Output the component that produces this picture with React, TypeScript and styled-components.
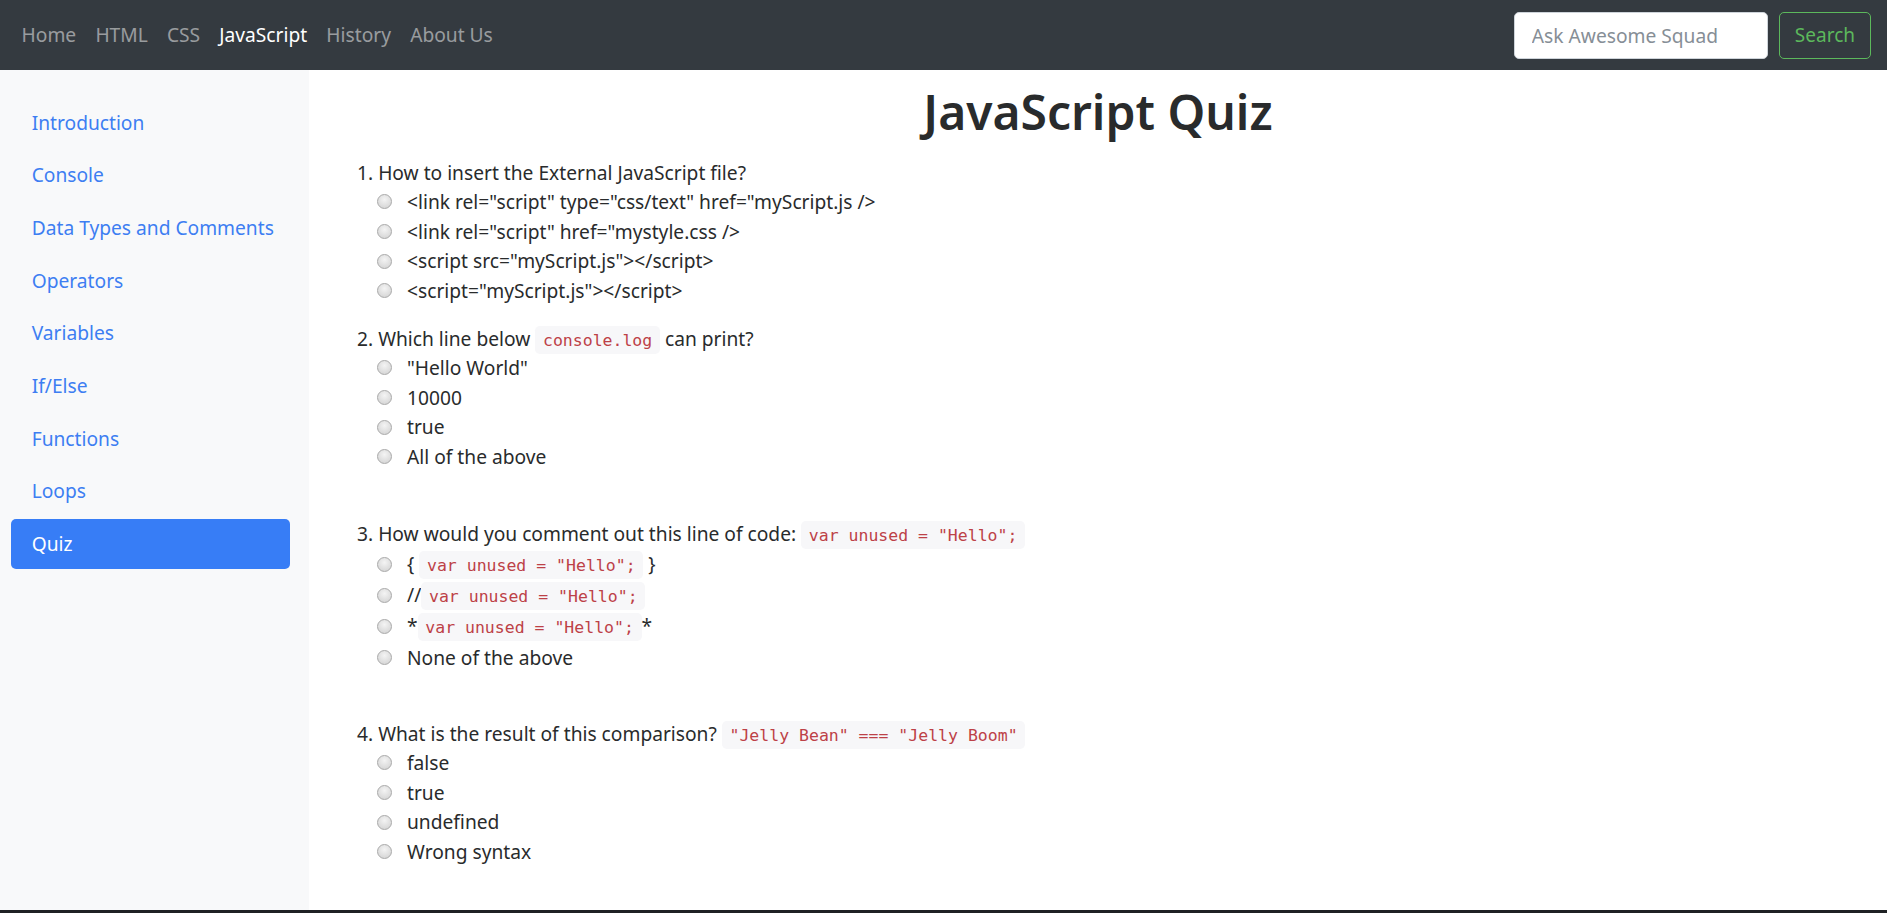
import React from 'react';
import styled, { createGlobalStyle } from 'styled-components';

const GlobalStyle = createGlobalStyle`
  html, body {
    margin: 0;
    padding: 0;
  }
  body {
    font-family: "Noto Sans", "Open Sans", sans-serif;
    color: #292b2c;
    background: #fff;
  }
  * {
    box-sizing: border-box;
  }
`;

const Page = styled.div`
  display: flex;
  flex-direction: column;
  height: 100vh;
  overflow: hidden;
`;

const Navbar = styled.nav`
  display: flex;
  align-items: center;
  justify-content: space-between;
  height: 70px;
  flex-shrink: 0;
  padding: 0 16px 0 12px;
  background: #343a40;
`;

const NavLinks = styled.div`
  display: flex;
  align-items: center;
`;

const NavLink = styled.a<{ $active?: boolean }>`
  padding: 0 9.6px;
  font-size: 19.2px;
  line-height: 28.8px;
  text-decoration: none;
  white-space: nowrap;
  color: ${p => (p.$active ? '#fff' : 'rgba(255, 255, 255, 0.5)')};
`;

const SearchForm = styled.form`
  display: flex;
  align-items: center;
  gap: 11px;
`;

const SearchInput = styled.input`
  width: 254px;
  height: 47px;
  padding: 0 17px;
  border: 1px solid #ced4da;
  border-radius: 5px;
  font-family: inherit;
  font-size: 19.2px;
  color: #495057;
  background: #fff;
  outline: none;

  &::placeholder {
    color: #868e96;
  }
`;

const SearchButton = styled.button`
  height: 47px;
  padding: 0 15px;
  border: 1px solid #5cb85c;
  border-radius: 5px;
  background: transparent;
  color: #5cb85c;
  font-family: inherit;
  font-size: 19px;
`;

const Body = styled.div`
  display: flex;
  flex: 1;
  min-height: 0;
`;

const Sidebar = styled.aside`
  display: flex;
  flex-direction: column;
  gap: 2.7px;
  width: 309px;
  flex-shrink: 0;
  padding: 27.6px 19px 0 11px;
  background: #f8f9fa;
`;

const SideLink = styled.a<{ $active?: boolean }>`
  display: block;
  height: 50px;
  padding: 0 20.7px;
  line-height: 50px;
  font-size: 19.2px;
  white-space: nowrap;
  border-radius: 5px;
  text-decoration: none;
  color: ${p => (p.$active ? '#fff' : '#3d7ef2')};
  background: ${p => (p.$active ? '#377df6' : 'transparent')};
`;

const Main = styled.main`
  flex: 1;
  padding-top: 12.6px;
`;

const Title = styled.h1`
  margin: 0 0 17.4px;
  font-size: 48px;
  line-height: 57.6px;
  font-weight: 600;
  text-align: center;
  color: #292b2c;
`;

const QuizList = styled.div`
  padding-left: 48px;
`;

const Question = styled.div<{ $gap: number }>`
  margin-bottom: ${p => p.$gap}px;
`;

const QuestionText = styled.p<{ $row: number }>`
  margin: 0;
  font-size: 19.2px;
  line-height: ${p => p.$row}px;
  height: ${p => p.$row}px;
  white-space: nowrap;
`;

const Options = styled.div`
  padding-left: 20px;
`;

const Option = styled.label<{ $row: number }>`
  display: flex;
  align-items: center;
  gap: 15px;
  height: ${p => p.$row}px;
  font-size: 19.2px;
  line-height: ${p => p.$row}px;
  white-space: nowrap;
`;

const Radio = styled.input`
  appearance: none;
  width: 15px;
  height: 15px;
  margin: 0;
  flex-shrink: 0;
  border-radius: 50%;
  border: 1px solid #a9a9a9;
  background: radial-gradient(circle at 50% 35%, #f4f4f4 0%, #dedede 60%, #cfcfcf 100%);
`;

const Code = styled.code`
  padding: 4.5px 7.7px;
  font-family: "DejaVu Sans Mono", "Liberation Mono", monospace;
  font-size: 16.5px;
  color: #bd4147;
  background: #f7f7f9;
  border-radius: 4.8px;
`;

const BottomEdge = styled.div`
  height: 3px;
  flex-shrink: 0;
  background: #1f2124;
`;

const navItems = ['Home', 'HTML', 'CSS', 'JavaScript', 'History', 'About Us'];
const sideItems = [
  'Introduction',
  'Console',
  'Data Types and Comments',
  'Operators',
  'Variables',
  'If/Else',
  'Functions',
  'Loops',
  'Quiz',
];

const hello = 'var unused = "Hello";';

type Q = {
  n: number;
  text: React.ReactNode;
  options: React.ReactNode[];
  row: number;
  gap: number;
};

const questions: Q[] = [
  {
    n: 1,
    text: 'How to insert the External JavaScript file?',
    options: [
      '<link rel="script" type="css/text" href="myScript.js />',
      '<link rel="script" href="mystyle.css />',
      '<script src="myScript.js"></script>',
      '<script="myScript.js"></script>',
    ],
    row: 29.6,
    gap: 18,
  },
  {
    n: 2,
    text: <>Which line below <Code>console.log</Code> can print?</>,
    options: ['"Hello World"', '10000', 'true', 'All of the above'],
    row: 29.6,
    gap: 46.4,
  },
  {
    n: 3,
    text: <>How would you comment out this line of code: <Code>{hello}</Code></>,
    options: [
      <>{'{ '}<Code>{hello}</Code>{' }'}</>,
      <>//<Code>{hello}</Code></>,
      <>*<Code>{hello}</Code>*</>,
      'None of the above',
    ],
    row: 31,
    gap: 45.6,
  },
  {
    n: 4,
    text: <>What is the result of this comparison? <Code>"Jelly Bean" === "Jelly Boom"</Code></>,
    options: ['false', 'true', 'undefined', 'Wrong syntax'],
    row: 29.6,
    gap: 0,
  },
];

const App: React.FC = () => {
  return (
    <Page>
      <GlobalStyle />
      <Navbar>
        <NavLinks>
          {navItems.map(item => (
            <NavLink key={item} href="#" $active={item === 'JavaScript'}>
              {item}
            </NavLink>
          ))}
        </NavLinks>
        <SearchForm onSubmit={e => e.preventDefault()}>
          <SearchInput type="text" placeholder="Ask Awesome Squad" />
          <SearchButton type="submit">Search</SearchButton>
        </SearchForm>
      </Navbar>
      <Body>
        <Sidebar>
          {sideItems.map(item => (
            <SideLink key={item} href="#" $active={item === 'Quiz'}>
              {item}
            </SideLink>
          ))}
        </Sidebar>
        <Main>
          <Title>JavaScript Quiz</Title>
          <QuizList>
            {questions.map(q => (
              <Question key={q.n} $gap={q.gap}>
                <QuestionText $row={q.row}>
                  {q.n}. {q.text}
                </QuestionText>
                <Options>
                  {q.options.map((opt, i) => (
                    <Option key={i} $row={q.row}>
                      <Radio type="radio" name={`q${q.n}`} />
                      <span>{opt}</span>
                    </Option>
                  ))}
                </Options>
              </Question>
            ))}
          </QuizList>
        </Main>
      </Body>
      <BottomEdge />
    </Page>
  );
};

export default App;
